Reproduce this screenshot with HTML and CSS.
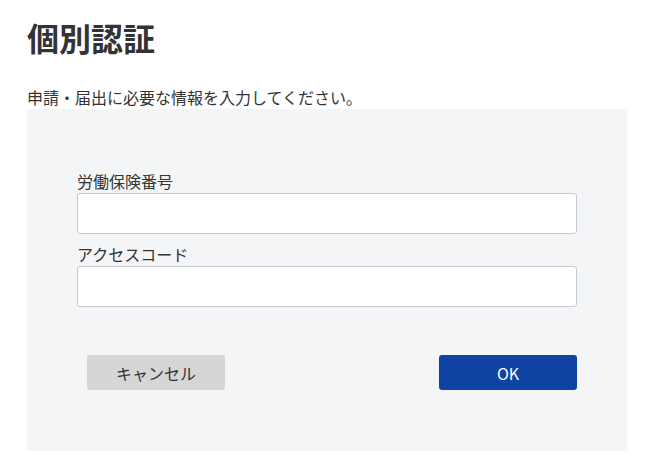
FILE: index.html
```html
<!DOCTYPE html>
<html lang="ja">
<head>
<meta charset="utf-8">
<link rel="stylesheet" href="styles.css">
</head>
<body>
<main class="page">
  <h1 class="title">個別認証</h1>
  <p class="lead">申請・届出に必要な情報を入力してください。</p>
  <section class="panel">
    <div class="field">
      <label class="label" for="num">労働保険番号</label>
      <input class="input" id="num" type="text">
    </div>
    <div class="field">
      <label class="label" for="code">アクセスコード</label>
      <input class="input" id="code" type="text">
    </div>
    <div class="actions">
      <button class="btn btn-cancel" type="button">キャンセル</button>
      <button class="btn btn-ok" type="button">OK</button>
    </div>
  </section>
</main>
</body>
</html>
```
FILE: styles.css
```css
* { box-sizing: border-box; }
html, body { margin: 0; padding: 0; background: #fff; }
body {
  font-family: "Noto Sans CJK JP", "Noto Sans", sans-serif;
  color: #333;
}
.page {
  padding: 16px 0 0 27px;
  width: 627px;
}
.title {
  margin: 0;
  font-size: 32px;
  font-weight: 700;
  line-height: 42px;
  color: #333;
}
.lead {
  margin: 28px 0 0;
  font-size: 16px;
  line-height: 23px;
}
.panel {
  background: #f4f5f7;
  width: 600px;
  height: 342px;
  padding: 61px 50px 0;
}
.field { display: flex; flex-direction: column; }
.field + .field { margin-top: 9px; }
.label {
  font-size: 16px;
  line-height: 22px;
  color: #333;
  margin-bottom: 1px;
}
.input {
  width: 500px;
  height: 41px;
  border: 1px solid #c6c8d0;
  border-radius: 3px;
  background: #fff;
  font: inherit;
}
.actions {
  display: flex;
  justify-content: space-between;
  padding-left: 10px;
  margin-top: 48px;
}
.btn {
  width: 138px;
  height: 35px;
  border: 0;
  border-radius: 3px;
  font-family: "Noto Sans CJK JP", "Noto Sans", sans-serif;
  font-size: 16px;
}
.btn-cancel { background: #d6d6d6; color: #333; }
.btn-ok { background: #0f44a5; color: #fff; }
```
